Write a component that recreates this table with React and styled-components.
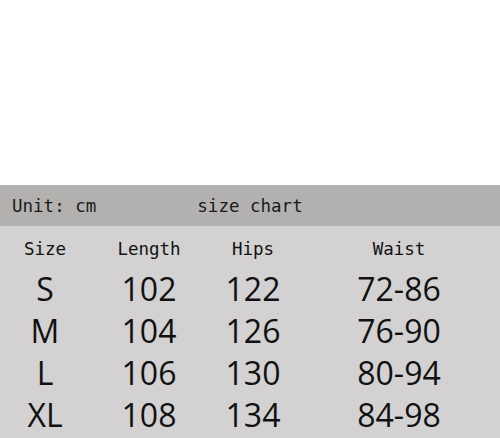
import React from 'react'
import styled, { createGlobalStyle } from 'styled-components'

const GlobalStyle = createGlobalStyle`
  html, body {
    margin: 0;
    padding: 0;
    background: #ffffff;
  }
`

const Page = styled.div`
  display: flex;
  flex-direction: column;
  height: 438px;
  width: 500px;
`

const Spacer = styled.div`
  height: 185px;
  background: #ffffff;
`

const Chart = styled.div`
  flex: 1;
  display: flex;
  flex-direction: column;
  background: #d3d1d2;
`

const TitleBar = styled.div`
  height: 41px;
  display: grid;
  grid-template-columns: 1fr auto 1fr;
  align-items: center;
  background: #b3b1b0;
  font-family: "DejaVu Sans Mono", "Liberation Mono", monospace;
  font-size: 17.5px;
  color: #1a1a1a;
`

const Unit = styled.span`
  padding-left: 12px;
`

const Title = styled.span`
  text-align: center;
`

const Row = styled.div`
  display: grid;
  grid-template-columns: 90px 118px 90px 1fr;
  height: 42px;
  align-items: center;
`

const Cell = styled.span`
  text-align: center;
  color: #111111;
  font-family: ${p => p.$head ? '"DejaVu Sans Mono", "Liberation Mono", monospace' : '"Open Sans", "Noto Sans", sans-serif'};
  font-size: ${p => p.$head ? '17.5px' : '32px'};
  line-height: 42px;
  ${p => p.$head && 'padding-top: 2px;'}
`

const headers = ['Size', 'Length', 'Hips', 'Waist']

const rows = [
  ['S', '102', '122', '72-86'],
  ['M', '104', '126', '76-90'],
  ['L', '106', '130', '80-94'],
  ['XL', '108', '134', '84-98'],
]

const App = () => {
  return (
    <Page>
      <GlobalStyle />
      <Spacer />
      <Chart>
        <TitleBar>
          <Unit>Unit: cm</Unit>
          <Title>size chart</Title>
          <span />
        </TitleBar>
        <Row>
          {headers.map(h => <Cell key={h} $head>{h}</Cell>)}
        </Row>
        {rows.map(r => (
          <Row key={r[0]}>
            {r.map((v, i) => <Cell key={i}>{v}</Cell>)}
          </Row>
        ))}
      </Chart>
    </Page>
  )
}

export default App
